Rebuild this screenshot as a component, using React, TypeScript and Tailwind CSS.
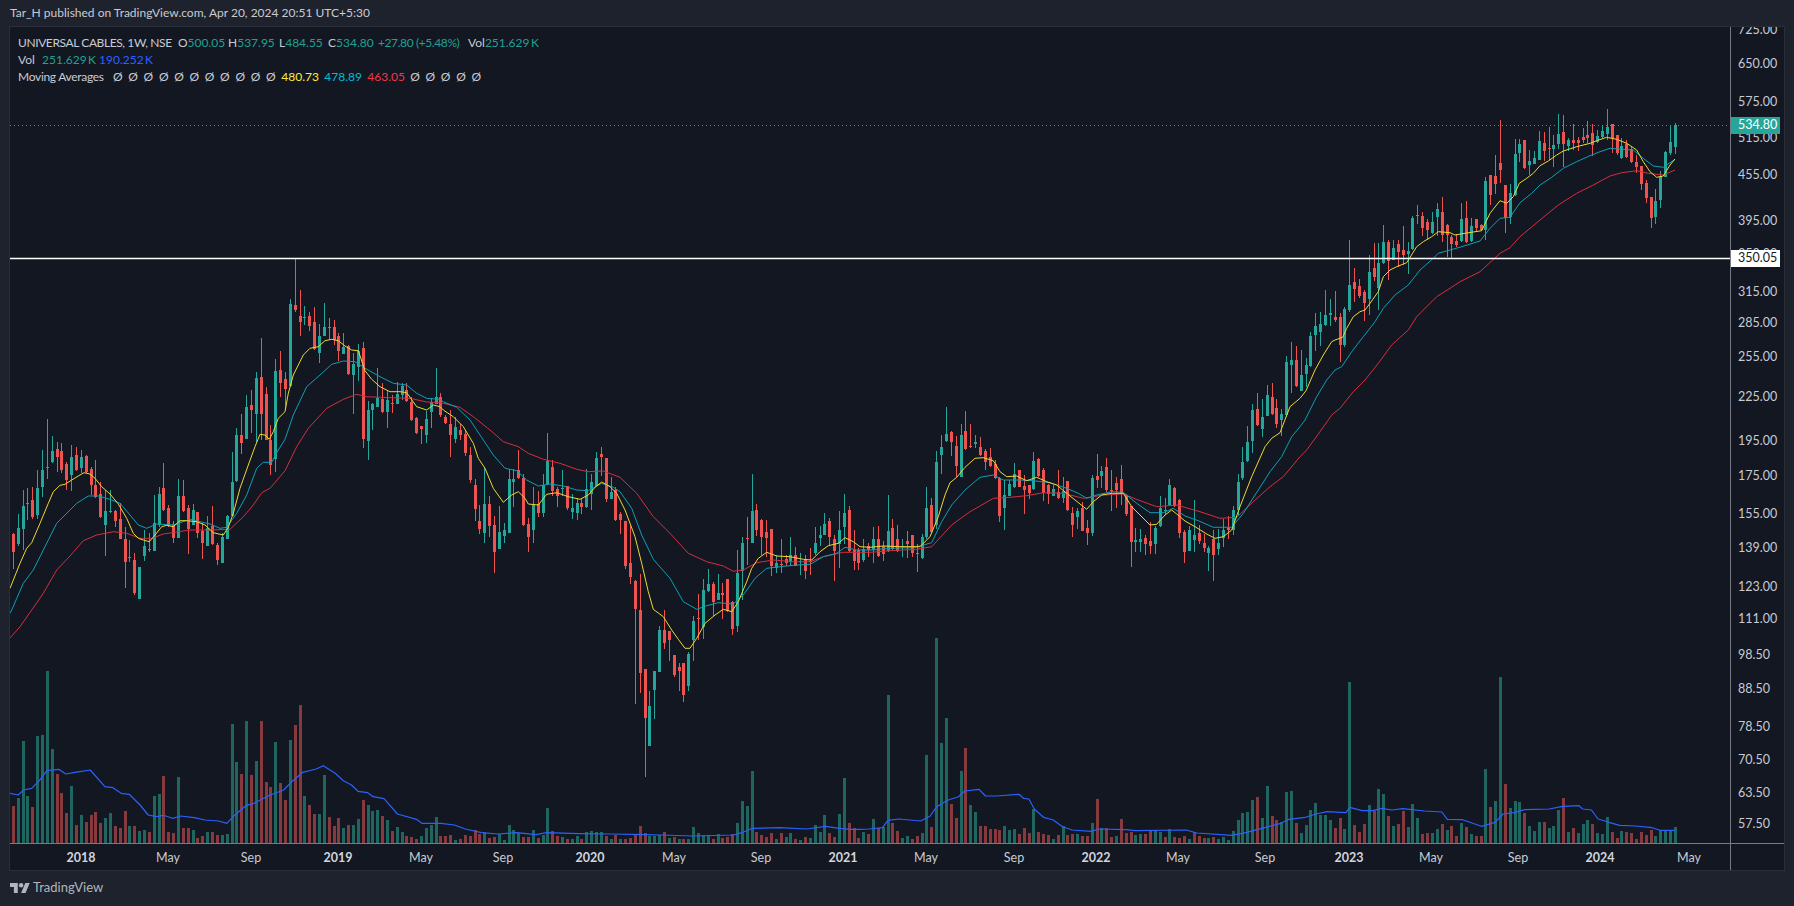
// Weekly chart traced from the published snapshot. Numbers are [up, bodyTop, bodyBottom, high, low]
// and are stored at 3x so each block just has its own y offset.
type Bar = number[]

const blockA: Bar[] = [
  [0,852,906,850,957],[1,834,882,793,888],[1,768,836,720,900],[1,759,762,715,810],[0,750,802,712,808],[1,714,795,660,808],
  [1,660,710,600,740],[0,651,653,507,687],[1,603,636,558,640],[0,597,620,576,666],[0,603,660,580,668],[0,641,690,635,720],
  [1,621,676,585,722],[0,615,660,590,662],[1,621,655,600,668],[0,618,665,615,668],[0,657,705,650,735],[0,705,741,630,745],
  [0,732,802,695,805],[1,783,825,720,918],[1,782,785,720,790],[0,783,813,780,830],[0,807,866,760,868],[0,867,936,830,1013],
  [1,922,925,870,935],[0,930,1030,910,1035],[1,951,1047,950,1047],[1,888,918,840,933],[0,896,899,850,905],[1,819,903,735,903],
  [1,732,826,712,830],[0,714,780,640,783],[0,774,828,765,830],[0,822,864,812,878],[1,738,864,687,864],[0,738,783,690,786],
  [0,774,837,765,912],[1,780,825,762,825],[0,786,849,786,865],[0,843,879,820,927],[1,834,888,798,888],[0,828,882,768,885],
  [0,885,930,880,945],[1,861,939,850,939],[1,797,867,795,867],[1,696,798,606,798],[1,555,693,533,696],[0,555,579,492,612],
  [1,471,567,436,567],[0,465,480,420,550],[1,384,492,366,575],[0,381,492,264,570],[0,432,570,411,570],[0,570,645,525,675],
  [1,363,627,327,665],[0,360,399,303,440],[0,387,417,366,480],[1,162,408,147,410],[0,165,180,24,186],[0,198,216,120,258],
  [1,202,205,168,225],[0,198,228,186,243],[0,216,297,170,300],[1,258,309,222,339],[1,231,258,159,258],[0,231,233,205,270],
  [0,231,270,210,285],[0,258,303,250,333],[1,291,312,250,312],[0,288,372,285,375],[1,342,375,310,492],[1,303,351,282,393],
  [0,294,567,276,594],[1,480,573,453,630],[1,462,480,458,540],[1,444,471,355,471],[0,447,486,400,490],[1,450,486,423,534],
  [0,459,461,435,489],[1,432,462,396,462],[1,408,435,400,450],[0,420,453,399,456],[0,456,510,440,513],[0,504,549,500,552],
  [0,528,537,528,582],[1,507,555,483,579],[1,456,486,444,534],[1,441,462,354,462],
]

const blockB: Bar[] = [
  [0,-10,45,-20,50],[0,50,70,45,72],[0,72,105,30,172],[1,82,117,50,130],[0,90,105,72,120],[0,102,158,90,168],
  [0,165,240,140,250],[0,255,327,238,362],[0,363,387,315,402],[1,312,399,200,428],[0,312,378,288,411],[0,375,456,348,520],
  [1,396,447,318,447],[1,390,408,370,430],[1,237,399,208,399],[1,237,246,208,320],[0,210,234,150,238],[0,234,375,223,378],
  [0,372,411,354,456],[1,315,390,262,428],[0,312,339,272,352],[1,255,339,222,350],[1,183,252,99,255],[0,201,273,180,288],
  [0,267,288,262,320],[1,265,268,210,288],[0,258,324,258,330],[1,324,336,282,358],[1,309,339,293,360],[0,309,321,295,343],
  [1,267,321,208,324],[1,246,282,223,330],[1,174,258,155,258],[0,162,171,141,228],[0,174,297,174,306],[1,276,297,232,297],
  [0,270,360,262,363],[0,342,360,336,402],[0,363,498,363,507],[0,489,531,378,552],[0,543,627,540,912],[0,630,819,522,879],
  [0,807,954,807,1131],[1,918,1038,873,1038],[1,813,870,813,957],[1,690,816,678,816],[0,690,729,630,747],[0,693,720,693,783],
  [0,765,825,765,831],[0,801,813,789,873],[0,789,885,789,906],[1,762,858,755,873],[1,663,720,648,783],[0,655,657,582,720],
  [1,570,681,537,717],[1,552,573,507,576],[0,552,606,546,648],[1,579,600,522,600],[0,579,584,550,657],[0,537,633,537,636],
  [0,606,687,603,705],[1,519,678,450,696],[1,429,513,411,600],[0,413,416,351,495],[1,333,429,222,429],[0,330,390,312,408],
  [0,360,411,357,465],[0,396,414,360,471],[0,387,498,387,528],[1,489,504,465,520],[0,492,494,417,519],[0,477,489,465,499],
  [1,465,486,411,499],[0,465,497,441,499],[1,483,485,459,525],[0,477,513,465,537],[0,483,487,445,525],[1,429,459,380,465],
  [1,405,414,378,438],[1,372,405,339,405],[0,363,411,355,438],[0,417,453,405,543],[1,390,432,333,504],[1,339,381,282,432],
  [0,330,453,318,456],[0,450,483,390,510],[0,450,489,445,510],[1,447,480,417,486],[0,438,450,429,471],
]

const blockC: Bar[] = [
  [1,447,480,411,519],[0,447,498,408,500],[0,468,492,453,513],[1,423,483,315,486],[0,414,477,387,480],[0,447,483,405,486],
  [1,469,472,447,501],[0,453,462,423,504],[0,435,489,435,501],[0,489,491,462,546],[1,441,504,432,507],[1,354,441,291,447],
  [0,345,426,324,429],[1,216,405,183,417],[1,171,195,135,252],[1,132,153,51,156],[0,126,156,123,198],[0,168,228,138,262],
  [1,135,261,102,261],[0,123,177,63,180],[0,169,172,102,174],[1,156,161,135,174],[0,171,195,141,198],[0,183,216,177,240],
  [0,201,228,174,231],[0,222,264,210,266],[0,264,378,262,396],[1,315,354,270,420],[1,282,318,270,318],[1,252,291,219,294],
  [0,240,291,240,291],[0,288,300,255,372],[0,285,310,285,327],[1,213,297,186,300],[0,207,258,204,260],[0,240,309,234,333],
  [0,285,312,282,342],[1,297,318,285,318],[0,306,324,240,327],[1,303,324,262,340],[0,273,360,273,363],[0,369,405,351,441],
  [1,363,381,354,417],[0,354,423,336,423],[0,414,429,390,465],[1,264,429,255,438],[0,258,270,192,294],[1,243,258,228,294],
  [0,231,300,204,306],[0,299,302,240,363],[0,279,300,262,354],[0,267,312,225,345],[0,315,372,312,378],[0,348,456,348,531],
  [1,450,456,414,486],[1,447,457,417,486],[0,444,462,435,495],[0,453,468,396,492],[1,414,462,408,492],[1,354,408,318,411],
  [1,360,363,324,375],[1,285,345,267,348],[0,294,348,291,351],[0,330,429,327,444],[0,426,486,420,519],[1,420,483,408,483],
  [1,435,450,330,486],[0,429,453,405,462],[0,459,474,432,486],[1,474,489,468,543],[0,447,495,420,573],[1,459,477,417,495],
  [1,420,444,387,471],[0,414,420,378,447],[1,360,420,348,435],[1,276,360,252,375],[1,216,264,171,270],[1,156,213,108,216],
  [1,60,153,42,189],[0,57,105,9,108],[1,81,117,27,141],[1,15,78,-15,78],[0,21,72,-20,75],[0,54,102,27,114],[1,72,90,57,138],
]

const blockD: Bar[] = [
  [1,426,585,408,590],[1,420,435,366,520],[0,420,498,378,501],[1,465,513,390,513],[1,435,462,414,500],[1,348,438,336,440],
  [1,318,345,279,393],[1,312,336,276,378],[1,285,315,210,318],[1,279,285,237,318],[0,291,300,213,306],[0,291,375,279,426],
  [1,267,375,261,381],[1,195,270,60,276],[0,186,207,144,246],[0,198,228,177,234],[0,216,249,210,303],[1,156,237,105,285],
  [0,144,171,69,183],[1,129,204,69,270],[1,66,129,15,132],[0,66,123,60,180],[1,84,120,60,120],[0,72,96,60,141],
]

const blockE: Bar[] = [
  [0,450,465,378,495],[1,453,462,426,522],[1,354,447,348,450],[0,345,347,315,372],[0,348,384,336,408],[0,366,390,357,420],
  [1,366,399,336,402],[1,327,351,309,408],[0,336,405,291,426],[0,375,405,372,471],[0,411,432,405,474],[0,423,435,402,441],
  [1,357,423,309,426],[0,354,426,303,429],[1,378,423,354,426],[0,357,384,357,396],[0,375,390,372,393],[1,243,390,231,420],
  [0,225,285,225,315],[0,228,252,165,282],[0,189,210,60,249],[0,255,354,255,399],[1,279,351,252,372],[1,162,285,117,288],
  [1,132,159,117,186],[0,120,204,120,207],[1,183,195,150,225],[1,174,192,153,192],[1,123,180,93,180],[0,129,153,96,183],
  [0,144,147,81,180],[1,135,147,105,201],[1,102,132,42,147],[0,96,132,45,201],[1,120,138,114,153],[0,120,129,72,150],
  [0,120,129,111,153],[0,111,120,84,129],[0,105,114,63,129],[0,99,135,72,168],[1,108,126,90,129],[1,93,111,75,114],
  [1,81,102,27,120],[0,72,114,72,159],[0,105,159,105,165],[1,138,174,114,177],[0,132,171,120,174],[0,147,186,141,189],
  [0,186,201,165,219],[0,198,252,198,270],[0,249,294,240,309],[0,291,354,291,384],[1,303,351,267,372],[1,228,300,213,324],
  [1,156,231,153,231],[1,126,159,78,165],[1,75,141,69,162],
]

const shift = (bars: Bar[], y0: number) => bars.map(([up, a, b, h, l]) => ({ up, top: y0 + a / 3, bot: y0 + b / 3, hi: y0 + h / 3, lo: y0 + l / 3 }))
const candles = [...shift(blockA, 250), ...shift(blockB, 400), ...shift(blockC, 390), ...shift(blockD, 220), ...shift(blockE, 100)]
const closeY = (i: number) => (candles[i].up ? candles[i].top : candles[i].bot)

// volume tops at 3x, baseline is 549
const volTops = [
  438,414,243,408,441,228,225,33,267,342,399,459,378,495,465,486,465,456,489,474,459,498,504,453,498,498,513,510,516,408,402,348,516,519,351,504,504,510,534,528,516,516,525,525,522,
  192,306,342,183,345,303,183,366,381,246,369,420,240,195,135,408,435,462,462,345,471,498,474,504,495,495,477,420,435,453,450,468,480,513,501,516,528,531,537,528,504,495,471,528,528,
  525,540,537,525,528,510,522,516,534,531,522,540,495,510,519,531,531,510,534,525,444,513,528,531,537,537,528,537,516,513,516,516,528,537,525,537,537,534,525,498,519,528,528,525,516,
  534,531,537,537,537,501,519,525,525,537,522,534,531,522,489,423,438,333,516,525,531,519,537,519,531,519,537,540,531,534,495,516,465,519,531,462,354,489,504,
  534,516,522,477,504,501,105,489,513,534,528,537,528,519,285,501,-66,249,174,432,474,333,264,435,456,498,498,507,507,510,498,510,507,522,504,519,447,516,522,525,537,525,498,525,
  522,522,528,528,489,417,504,504,531,528,477,519,516,525,522,522,510,510,516,531,507,531,534,528,537,516,528,534,534,531,537,531,540,513,480,459,456,420,411,474,378,468,480,486,396,
  393,489,519,495,450,429,465,465,480,504,474,507,66,495,516,492,435,453,387,402,468,498,492,453,501,432,474,522,519,519,507,492,510,498,528,489,501,522,528,528,327,441,423,51,372,
  444,423,426,459,498,513,486,486,504,498,450,414,516,504,519,492,480,492,519,522,471,516,534,513,516,519,537,516,525,510,528,510,510,510,501,
]

type Pt = [number, number]
const section = (x0: number, y0: number, sx: number, pts: Pt[]): Pt[] => pts.map(([x, y]) => [x0 + x / sx, y0 + y / 3])
// sections overlap a bit, keep x increasing
const joined = (...parts: Pt[][]) => {
  const out: Pt[] = []
  for (const p of parts) for (const pt of p) if (!out.length || pt[0] > out[out.length - 1][0]) out.push(pt)
  return out.map((p) => `${p[0].toFixed(1)},${p[1].toFixed(1)}`).join(" ")
}

const yellow = joined(
  section(10, 250, 3, [[0,1015],[30,940],[50,895],[65,878],[90,820],[115,760],[130,725],[150,706],[165,703],[185,690],[205,678],[222,668],[240,672],[255,685],[275,710],[300,732],[325,762],[350,805],[370,850],[385,865],[400,870],[418,875],[435,855],[455,830],[470,826],[490,830],[510,812],[530,812],[560,815],[585,825],[610,848],[640,855],[655,832],[670,790],[690,715],[715,645],[735,590],[750,553],[765,555],[778,568],[790,545],[805,505],[825,485],[835,430],[850,375],[880,315],[900,295],[925,290],[945,272],[965,268],[985,272],[1005,288],[1025,300],[1045,302],[1065,362],[1085,388],[1110,410],[1140,425],[1170,425],[1190,428],[1220,470],[1250,480],[1270,465],[1290,470]]),
  section(440, 400, 3, [[10,30],[40,50],[70,80],[100,130],[115,175],[135,205],[160,265],[190,307],[215,285],[235,275],[255,295],[265,312],[295,315],[320,283],[350,278],[385,290],[420,298],[445,285],[465,262],[485,246],[510,260],[530,280],[555,330],[585,410],[605,490],[625,575],[640,628],[670,650],[695,690],[715,718],[735,745],[750,745],[770,715],[795,670],[825,645],[850,628],[875,635],[895,605],[920,545],[935,505],[955,475],[980,457],[1010,468],[1050,470],[1090,478],[1115,480],[1140,455],[1165,437],[1195,430],[1215,413],[1240,425],[1260,440],[1290,442]]),
  section(870, 390, 3, [[0,470],[40,468],[90,470],[150,470],[180,440],[205,380],[225,315],[240,278],[260,262],[285,232],[315,205],[340,203],[370,212],[390,245],[410,260],[440,258],[470,272],[500,262],[530,275],[560,285],[590,310],[630,342],[650,358],[670,335],[695,315],[725,310],[760,310],[785,350],[810,375],[840,405],[860,403],[885,375],[905,360],[920,372],[945,393],[975,410],[1010,432],[1035,445],[1060,440],[1085,420],[1110,350],[1145,260],[1185,170],[1205,145],[1230,128],[1260,50],[1290,25]]),
  section(1220, 220, 3, [[258,512],[285,450],[310,405],[335,365],[345,360],[368,352],[380,325],[400,290],[420,275],[435,270],[450,250],[475,215],[490,170],[510,150],[530,140],[560,128],[590,80],[610,65],[635,50],[655,35],[690,38]]),
  section(1400, 100, 3, [[165,405],[195,400],[245,392],[270,340],[300,302],[320,310],[340,290],[358,250],[380,235],[400,220],[420,197],[445,183],[470,165],[490,153],[530,140],[570,130],[590,122],[620,112],[650,118],[680,130],[710,150],[730,185],[750,215],[770,232],[790,228],[810,195],[825,177]]),
)

const teal = joined(
  section(10, 250, 3, [[0,1090],[5,1080],[40,1000],[70,960],[100,900],[140,820],[165,795],[200,760],[235,738],[265,738],[300,748],[330,760],[360,795],[385,825],[410,835],[440,822],[490,825],[540,808],[600,822],[630,835],[650,832],[680,790],[710,735],[740,655],[760,637],[785,637],[800,608],[825,568],[850,495],[890,410],[930,375],[965,343],[1000,333],[1035,335],[1065,355],[1110,380],[1150,400],[1190,405],[1220,430],[1250,445],[1290,448]]),
  section(440, 400, 3, [[10,5],[50,22],[90,60],[120,105],[160,165],[195,205],[230,212],[260,240],[295,258],[330,252],[370,258],[410,270],[445,272],[485,250],[520,262],[540,275],[575,325],[605,405],[640,478],[690,535],[730,605],[770,628],[800,617],[835,608],[880,612],[910,585],[945,535],[980,505],[1020,500],[1070,495],[1110,493],[1150,470],[1190,460],[1215,442],[1250,450],[1290,450]]),
  section(870, 390, 3, [[0,478],[60,475],[130,473],[185,458],[215,395],[245,345],[285,300],[330,262],[370,255],[400,270],[450,270],[490,272],[540,278],[590,295],[625,310],[650,325],[680,315],[725,305],[760,307],[800,340],[840,368],[880,368],[910,355],[945,378],[985,392],[1030,412],[1085,412],[1120,370],[1165,300],[1200,245],[1235,200],[1265,140],[1290,110]]),
  section(1220, 220, 3, [[255,600],[290,530],[320,480],[345,450],[365,440],[395,395],[430,350],[465,305],[490,265],[525,225],[565,195],[600,150],[640,115],[655,100],[690,90]]),
  section(1400, 100, 3, [[185,440],[240,423],[270,385],[300,355],[330,352],[360,308],[395,280],[420,255],[455,232],[490,205],[530,185],[570,167],[600,155],[630,145],[665,148],[700,150],[730,175],[760,198],[790,202],[825,178]]),
)

const red = joined(
  section(10, 250, 3, [[0,1164],[30,1130],[65,1080],[100,1030],[140,960],[180,918],[220,872],[260,855],[310,845],[350,850],[390,865],[425,865],[460,852],[540,840],[600,840],[660,838],[700,800],[730,765],[755,728],[780,715],[825,662],[860,590],[895,535],[950,475],[1000,448],[1040,433],[1070,440],[1140,443],[1200,445],[1250,456],[1290,458]]),
  section(440, 400, 3, [[10,10],[60,22],[100,50],[150,90],[190,125],[235,140],[265,160],[310,178],[360,190],[410,208],[445,215],[490,213],[540,232],[590,280],[640,350],[690,400],[745,460],[800,485],[850,498],[880,514],[910,510],[950,488],[1000,480],[1060,485],[1110,485],[1150,470],[1210,457],[1290,457]]),
  section(870, 390, 3, [[0,485],[60,482],[140,478],[185,470],[245,405],[300,365],[370,325],[420,322],[470,317],[520,308],[580,310],[640,325],[700,315],[760,312],[810,332],[860,350],[920,345],[990,365],[1050,385],[1100,382],[1150,335],[1200,290],[1240,260],[1290,200]]),
  section(1220, 220, 3, [[260,690],[300,635],[335,585],[360,565],[400,515],[435,480],[475,430],[515,375],[565,330],[590,290],[650,230],[690,205]]),
  section(1400, 100, 3, [[180,545],[240,515],[300,460],[330,443],[360,410],[420,360],[475,315],[530,280],[580,255],[630,228],[665,218],[710,212],[745,220],[790,225],[825,210]]),
)

const volAvg = joined(
  section(10, 660, 1.845, [[0,400],[15,405],[25,390],[40,385],[55,360],[68,332],[90,328],[103,342],[120,337],[148,330],[175,380],[190,383],[205,400],[220,403],[240,435],[255,465],[270,470],[283,466],[300,475],[315,468],[340,473],[360,480],[385,483],[400,490],[415,465],[435,437],[450,430],[480,405],[505,390],[520,365],[540,337],[565,327],[578,317],[600,340],[615,362],[630,375],[642,394],[660,398],[670,410],[690,416],[715,462],[750,478],[760,490],[795,490],[820,495],[840,507],[870,518],[900,522],[935,518],[970,524],[990,518],[1050,521],[1110,522],[1170,524],[1200,525],[1260,528],[1335,525],[1350,518],[1370,505],[1420,503],[1470,507],[1505,499],[1530,505],[1550,508],[1568,508]]),
  section(850, 660, 1.845, [[0,507],[35,507],[60,503],[70,481],[90,477],[130,483],[148,468],[160,440],[180,421],[200,410],[212,393],[238,388],[250,408],[270,408],[312,403],[320,415],[330,417],[340,447],[357,472],[375,480],[392,500],[410,510],[445,514],[460,507],[510,509],[525,512],[620,510],[640,519],[705,526],[730,518],[760,505],[795,490],[810,478],[840,472],[860,462],[880,455],[915,458],[922,442],[945,452],[965,452],[980,445],[1000,450],[1020,446],[1060,453],[1092,456],[1102,478],[1130,479],[1165,499],[1190,487],[1205,462],[1225,458],[1245,449],[1290,447],[1315,439],[1345,437],[1352,447],[1368,450],[1380,477],[1400,487],[1420,496],[1450,498],[1480,503],[1495,511],[1522,511]]),
)

const priceTicks: [string, number][] = [
  ["725.00", 30], ["650.00", 64], ["575.00", 102], ["515.00", 138], ["455.00", 175], ["395.00", 221], ["350.00", 254],
  ["315.00", 292], ["285.00", 323], ["255.00", 357], ["225.00", 397], ["195.00", 441], ["175.00", 476], ["155.00", 514],
  ["139.00", 548], ["123.00", 587], ["111.00", 619], ["98.50", 655], ["88.50", 689], ["78.50", 727], ["70.50", 760],
  ["63.50", 793], ["57.50", 824],
]

const timeTicks: [string, number, boolean][] = [
  ["2018", 81, true], ["May", 168, false], ["Sep", 251, false], ["2019", 338, true], ["May", 421, false], ["Sep", 503, false],
  ["2020", 590, true], ["May", 674, false], ["Sep", 761, false], ["2021", 843, true], ["May", 926, false], ["Sep", 1014, false],
  ["2022", 1096, true], ["May", 1178, false], ["Sep", 1265, false], ["2023", 1349, true], ["May", 1431, false], ["Sep", 1518, false],
  ["2024", 1600, true], ["May", 1689, false],
]

const barX = (i: number) => Math.floor(13.3 + i * 4.86)

function Plot() {
  return (
    <svg className="absolute inset-0" width="1720" height="816" viewBox="10 27 1720 816">
      <g shapeRendering="crispEdges">
        {volTops.map((t, i) => {
          const h = (549 - t) / 3
          // volume colour goes by close against the previous close
          const up = i > 0 && closeY(i) <= closeY(i - 1)
          return <rect key={i} x={barX(i) - 1} y={843 - h} width="3" height={h} fill={up ? "#1f6560" : "#873a3d"} />
        })}
      </g>
      <polyline points={volAvg} fill="none" stroke="#2962ff" strokeWidth="1.2" strokeLinejoin="round" />
      <g shapeRendering="crispEdges">
        {candles.map((c, i) => (
          <g key={i} fill={c.up ? "#26a69a" : "#ef5350"}>
            <rect x={barX(i)} y={c.hi} width="1" height={Math.max(1, c.lo - c.hi)} />
            <rect x={barX(i) - 1} y={c.top} width="3" height={Math.max(1, c.bot - c.top)} />
          </g>
        ))}
      </g>
      <polyline points={red} fill="none" stroke="#d32f3f" strokeWidth="1" strokeLinejoin="round" />
      <polyline points={teal} fill="none" stroke="#0d9fb5" strokeWidth="1" strokeLinejoin="round" />
      <polyline points={yellow} fill="none" stroke="#ecd932" strokeWidth="1" strokeLinejoin="round" />
      <line x1="10" x2="1730" y1="125.5" y2="125.5" stroke="#26a69a" strokeWidth="1" strokeDasharray="1 3" />
      <line x1="10" x2="1730" y1="258.5" y2="258.5" stroke="#ffffff" strokeWidth="1.5" />
    </svg>
  )
}

function Legend() {
  const teal = "text-[#22a094]"
  return (
    <div className="absolute left-[8px] top-[7px] flex flex-col whitespace-nowrap text-[12px] leading-[17px] text-[#c8cbd3]">
      <div className="flex">
        <span className="w-[160px] shrink-0 tracking-[-0.4px]">UNIVERSAL CABLES, 1W, NSE</span>
        <span className="w-[50px] shrink-0">O<span className={teal}>500.05</span></span>
        <span className="w-[51px] shrink-0">H<span className={teal}>537.95</span></span>
        <span className="w-[49px] shrink-0">L<span className={teal}>484.55</span></span>
        <span className="w-[50px] shrink-0">C<span className={teal}>534.80</span></span>
        <span className={`w-[90px] shrink-0 tracking-[-0.4px] ${teal}`}>+27.80 (+5.48%)</span>
        <span>Vol<span className={teal}>251.629{"\u2009"}K</span></span>
      </div>
      <div className="flex">
        <span className="w-[24px] shrink-0">Vol</span>
        <span className={`w-[57px] shrink-0 ${teal}`}>251.629{"\u2009"}K</span>
        <span className="text-[#2962ff]">190.252{"\u2009"}K</span>
      </div>
      <div className="flex">
        <span className="w-[95px] shrink-0 tracking-[-0.3px]">Moving Averages</span>
        <Empties n={11} />
        <span className="w-[43px] shrink-0 text-[#ffeb3b]">480.73</span>
        <span className="w-[43px] shrink-0 text-[#00bcd4]">478.89</span>
        <span className="w-[43px] shrink-0 text-[#f23645]">463.05</span>
        <Empties n={5} />
      </div>
    </div>
  )
}

function Empties({ n }: { n: number }) {
  return (
    <>
      {Array.from({ length: n }).map((_, i) => (
        <span key={i} className="w-[15.3px] shrink-0">Ø</span>
      ))}
    </>
  )
}

export default function App() {
  return (
    <div className="flex h-[906px] w-[1794px] flex-col overflow-hidden bg-[#1e222d] pl-[9px] [font-family:'Lato','DejaVu_Sans',sans-serif]">
      <div className="flex h-[26px] items-center pl-px text-[12px] text-[#c8cbd3]">Tar_H published on TradingView.com, Apr 20, 2024 20:51 UTC+5:30</div>

      <div className="flex h-[845px] w-[1776px] flex-col border border-[#2a2e39] bg-[#131722]">
        <div className="flex h-[816px]">
          <div className="relative w-[1720px]">
            <Plot />
            <Legend />
          </div>
          <div className="relative w-[54px] overflow-hidden border-l border-[#787b86] text-[12.5px] text-[#c8cbd3]">
            {priceTicks.map(([label, y]) => (
              <span key={label} className="absolute left-[7px] -translate-y-1/2 leading-none" style={{ top: y - 27 }}>
                {label}
              </span>
            ))}
            <span className="absolute left-0 top-[90px] flex h-[17px] w-[49px] items-center pl-[7px] bg-[#26a69a] text-[#ffffff]">534.80</span>
            <span className="absolute left-0 top-[223px] flex h-[17px] w-[49px] items-center pl-[7px] bg-[#ffffff] text-[#131722]">350.05</span>
          </div>
        </div>
        <div className="flex h-[27px] border-t border-[#787b86]">
          <div className="relative w-[1720px] text-[12.5px] text-[#c8cbd3]">
            {timeTicks.map(([label, x, year]) => (
              <span key={label + x} className={`absolute top-[5px] -translate-x-1/2 ${year ? "font-bold text-[#d1d4dc]" : ""}`} style={{ left: x - 10 }}>
                {label}
              </span>
            ))}
          </div>
          <div className="w-[54px] border-l border-[#787b86]" />
        </div>
      </div>

      <div className="flex flex-1 items-center gap-[3px] pl-px pb-[1px] text-[13px] text-[#b2b5be]">
        <svg width="20" height="10" viewBox="0 4 36 18" fill="#b2b5be">
          <path d="M14 22H7V11H0V4h14v18zM28 22h-8l7.5-18h8L28 22z" />
          <circle cx="20" cy="8" r="4" />
        </svg>
        <span>TradingView</span>
      </div>
    </div>
  )
}
